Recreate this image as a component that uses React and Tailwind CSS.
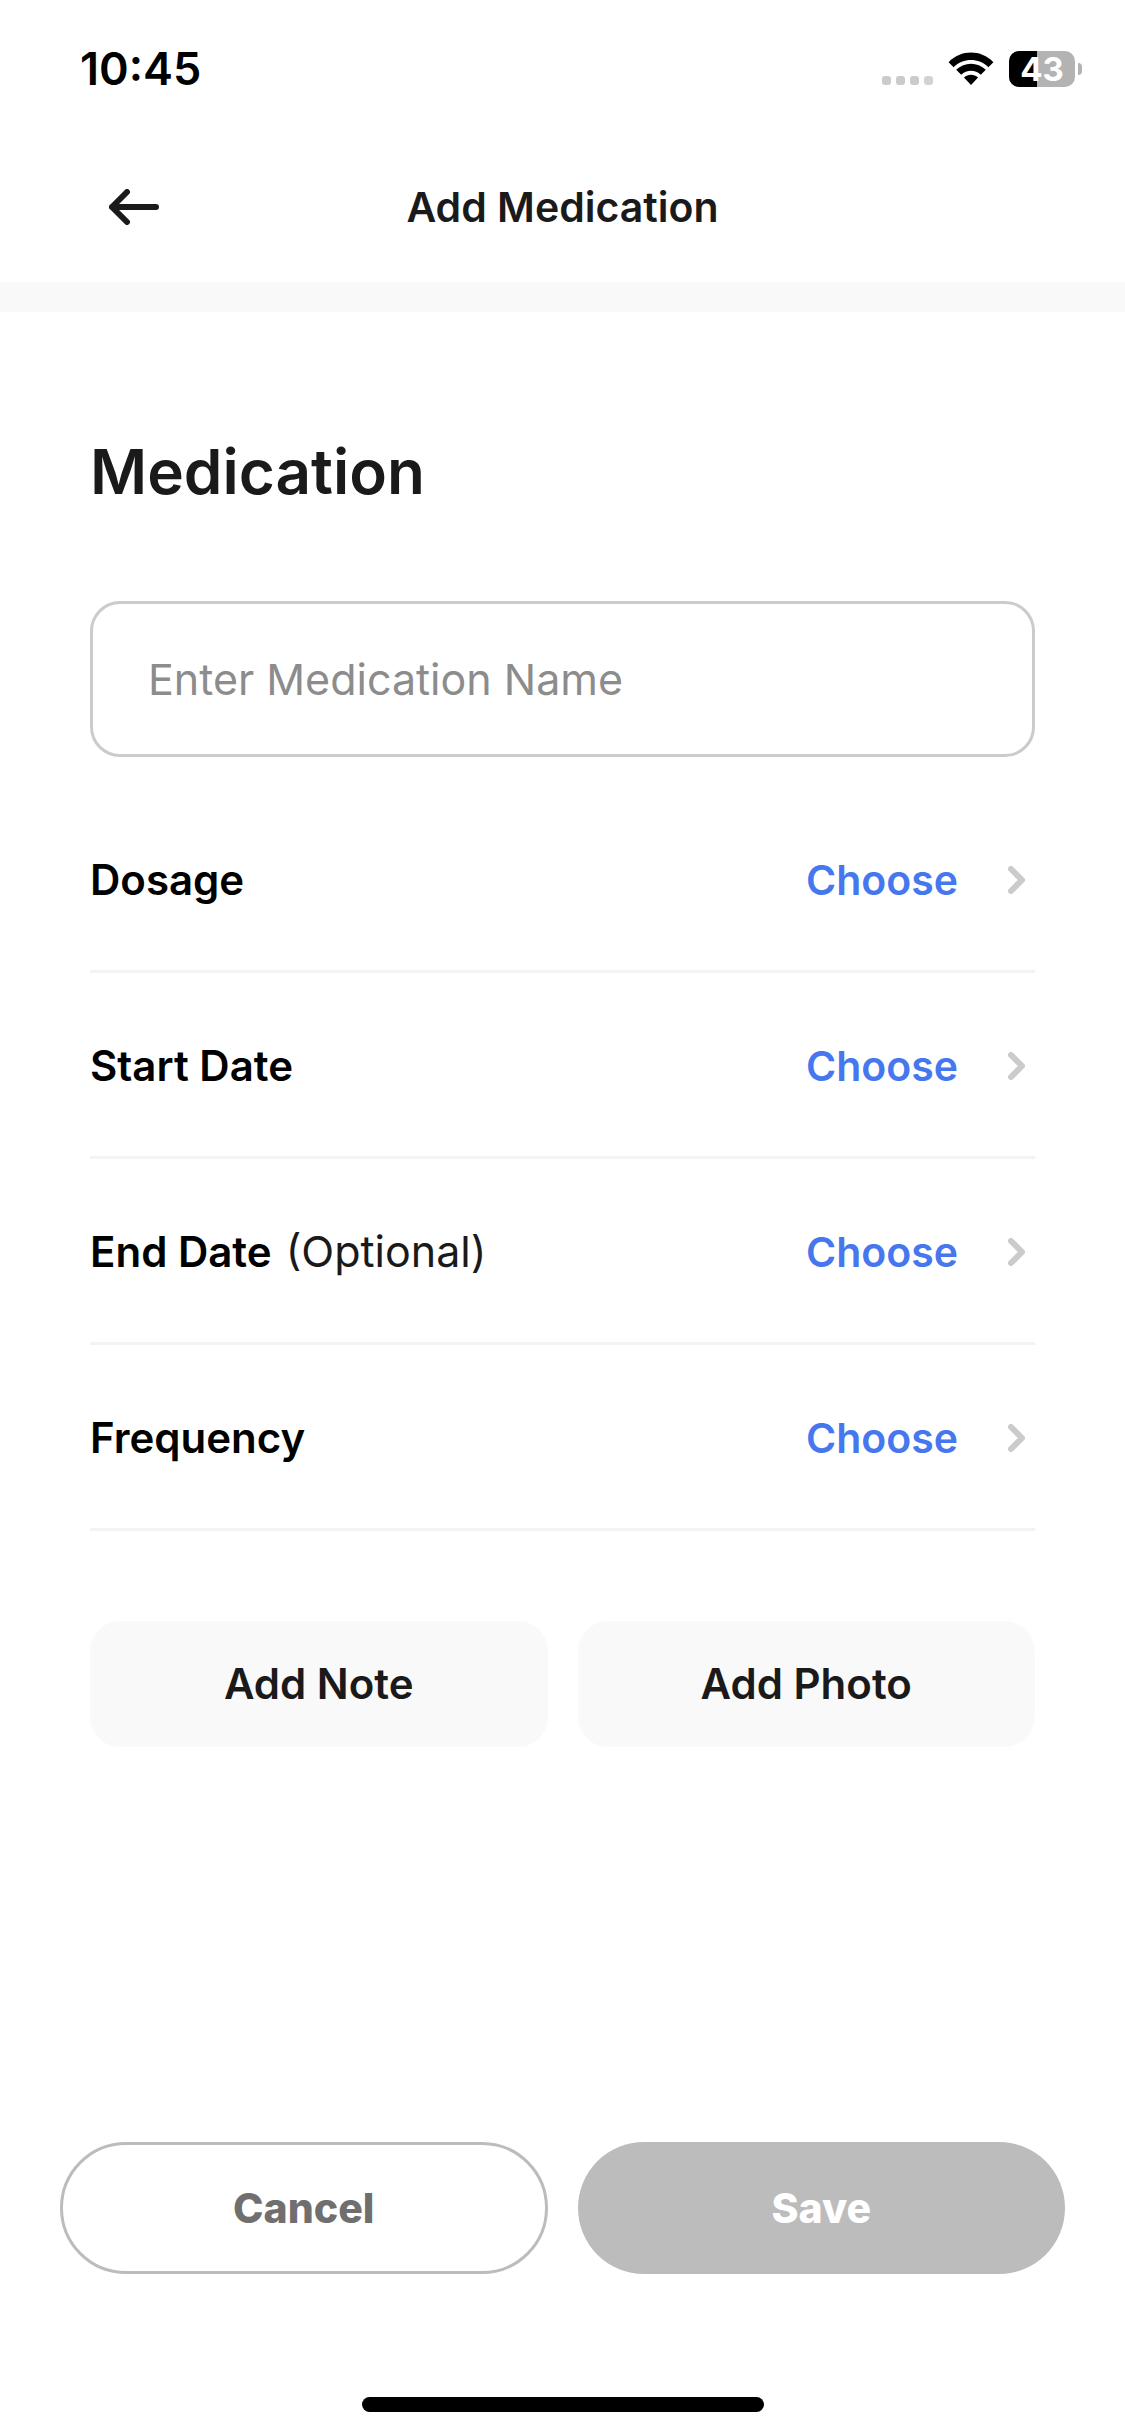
const FIELDS = [
  { id: 'dosage', label: 'Dosage' },
  { id: 'start-date', label: 'Start Date' },
  { id: 'end-date', label: 'End Date', optional: true },
  { id: 'frequency', label: 'Frequency' },
]

function WifiIcon() {
  return (
    <svg className="w-[46px] h-[34px]" viewBox="0 0 46 34" aria-hidden="true">
      <path d="M0.6 10.2C13 -2.6 33 -2.6 45.4 10.2L40.4 15.2C30.8 5.6 15.2 5.6 5.6 15.2Z" />
      <path d="M8.2 17.8C16.4 9.6 29.6 9.6 37.8 17.8L32.8 22.8C27.4 17.4 18.6 17.4 13.2 22.8Z" />
      <path d="M16 25.6C19.9 21.9 26.1 21.9 30 25.6L23 33Z" />
    </svg>
  )
}

function Battery({ level }) {
  return (
    <div className="flex items-center gap-[3px]">
      <div className="relative w-[66px] h-9 rounded-[10px] bg-[#b3b3b3]">
        <div className="absolute inset-y-0 left-0 rounded-l-[10px] bg-black" style={{ width: `${level}%` }} />
        <span className="relative flex h-full items-center justify-center text-[33px] leading-9 font-bold text-white">
          {level}
        </span>
      </div>
      <div className="w-1 h-3 rounded-r-full bg-[#b3b3b3]" />
    </div>
  )
}

function StatusBar() {
  return (
    <div className="flex h-33 items-center justify-between pt-1.5 pl-20 pr-[43px] text-black">
      <span className="text-[45px] leading-12 font-semibold">10:45</span>
      <div className="flex items-center">
        <div className="flex gap-[5px] pt-[22px] mr-[15px]">
          <span className="size-[9px] rounded-[3px] bg-[#cbcbcb]" />
          <span className="size-[9px] rounded-[3px] bg-[#cbcbcb]" />
          <span className="size-[9px] rounded-[3px] bg-[#cbcbcb]" />
          <span className="size-[9px] rounded-[3px] bg-[#d3d3d3]" />
        </div>
        <div className="mr-[15px]">
          <WifiIcon />
        </div>
        <Battery level={43} />
      </div>
    </div>
  )
}

function Header() {
  return (
    <header className="grid h-[150px] grid-cols-[1fr_auto_1fr] items-center px-[109px]">
      <button type="button" aria-label="Back" className="justify-self-start">
        <svg
          className="w-[51px] h-9"
          viewBox="0 0 51 36"
          fill="none"
          stroke="#1a1a1a"
          strokeWidth="6"
          strokeLinecap="round"
          strokeLinejoin="round"
          aria-hidden="true"
        >
          <path d="M47 18H3M18 3L3 18L18 33" />
        </svg>
      </button>
      <h1 className="text-[41px] leading-12 font-semibold">Add Medication</h1>
    </header>
  )
}

function FieldRow({ id, label, optional }) {
  return (
    <li className="flex h-[186px] items-center justify-between border-b-3 border-[#f3f3f3] pt-0.5">
      <span id={id} className="flex items-baseline gap-3.5 leading-12 text-black">
        <span className="text-[42px] font-semibold">{label}</span>
        {optional && <span className="text-[43px] text-[#1a1a1a]">(Optional)</span>}
      </span>
      <button
        type="button"
        aria-describedby={id}
        className="flex items-center gap-[50px] pr-2.5 text-[41px] leading-12 font-semibold text-[#4777ee]"
      >
        Choose
        <svg
          className="w-[17px] h-7"
          viewBox="0 0 17 28"
          fill="none"
          stroke="#cbcbcb"
          strokeWidth="6"
          strokeLinecap="round"
          strokeLinejoin="round"
          aria-hidden="true"
        >
          <path d="M3 3L14 14L3 25" />
        </svg>
      </button>
    </li>
  )
}

function App() {
  return (
    <div className="flex min-h-screen flex-col bg-white font-['Inter',sans-serif] text-[#1a1a1a]">
      <StatusBar />
      <Header />

      <main className="border-t-30 border-[#f9f9f9] px-[90px] pt-[120px]">
        <h2 className="text-[62px] leading-20 font-semibold">Medication</h2>

        <input
          type="text"
          aria-label="Medication name"
          placeholder="Enter Medication Name"
          className="mt-[89px] h-39 w-full rounded-[30px] border-3 border-[#cbcbcb] px-[55px] text-[43px] placeholder:text-[#8c8c8c]"
        />

        <ul className="mt-[30px]">
          {FIELDS.map((field) => (
            <FieldRow key={field.id} {...field} />
          ))}
        </ul>

        <div className="mt-[90px] grid grid-cols-2 gap-[30px] text-[42px] leading-12 font-semibold">
          <button type="button" className="h-[126px] rounded-[30px] bg-[#f9f9f9]">
            Add Note
          </button>
          <button type="button" className="h-[126px] rounded-[30px] bg-[#f9f9f9]">
            Add Photo
          </button>
        </div>
      </main>

      <footer className="mt-auto px-15 pb-6">
        <div className="grid grid-cols-2 gap-[30px] text-[41px] leading-12 font-extrabold">
          <button type="button" className="h-33 rounded-full border-3 border-[#bcbcbc] text-[#6f6f6f]">
            Cancel
          </button>
          <button type="button" className="h-33 rounded-full bg-[#bcbcbc] text-white">
            Save
          </button>
        </div>
        <div className="mx-auto mt-[123px] h-[15px] w-[402px] rounded-full bg-black" />
      </footer>
    </div>
  )
}

export default App
